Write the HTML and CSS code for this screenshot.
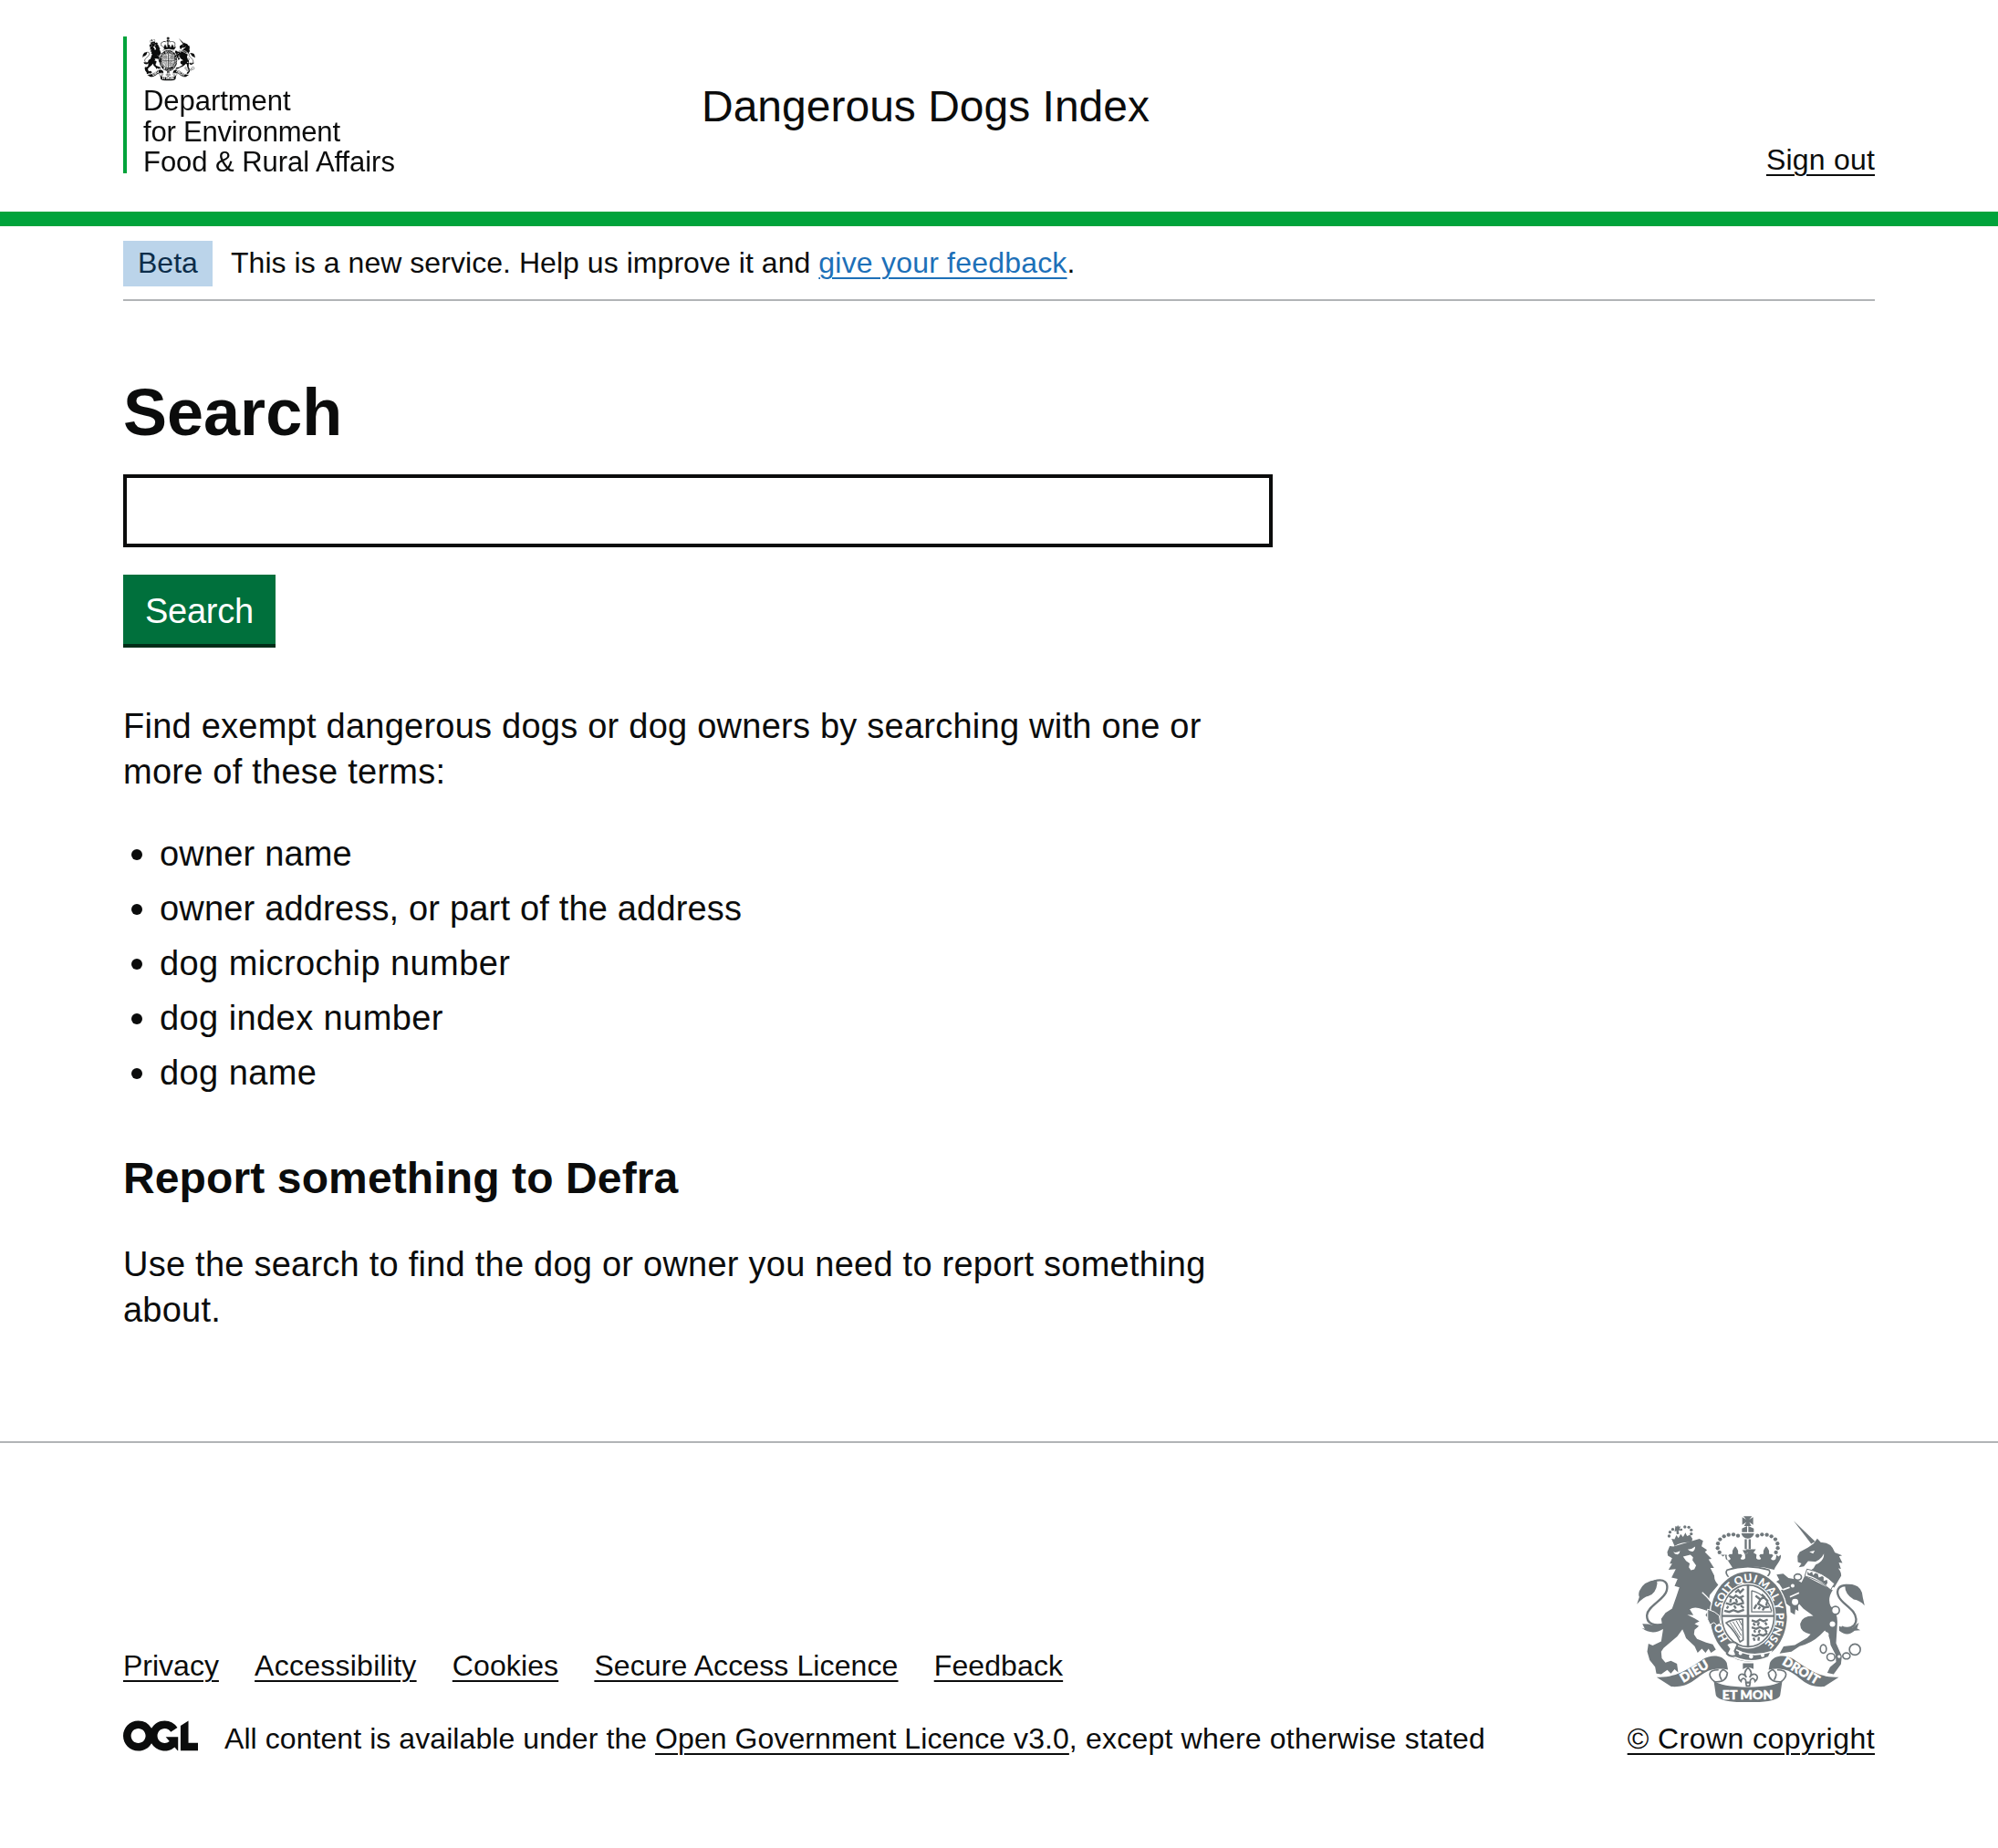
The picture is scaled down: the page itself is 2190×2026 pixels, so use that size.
FILE: index.html
```html
<!DOCTYPE html>
<html lang="en">
<head>
<meta charset="utf-8">
<title>Search - Dangerous Dogs Index</title>
<link rel="stylesheet" href="styles.css">
</head>
<body>
<svg class="sprite" width="0" height="0" aria-hidden="true">
  <symbol id="crest" viewBox="72 65 750 613">
    <!-- imperial crown -->
    <g fill="currentColor">
      <path d="M423 66h28l-9 11 13-8v25l-13-9 7 13h-24l7-13-13 9V69l13 8z"/>
      <path d="M418 118v-12l17-8v20zM439 98l18 8v12h-18zM416 122h42q-3 16-21 17-18-1-21-17z"/>
      <path d="M427 142h7v32h-7zM440 142h7v32h-7z"/>
      <circle cx="405" cy="130" r="6.500"/><circle cx="390" cy="126" r="6.500"/><circle cx="374" cy="127" r="6.500"/><circle cx="359" cy="132" r="6.500"/><circle cx="346" cy="142" r="6.500"/><circle cx="339" cy="156" r="6.500"/><circle cx="338" cy="171" r="6.500"/><circle cx="344" cy="185" r="6.500"/>
      <circle cx="469" cy="130" r="6.500"/><circle cx="484" cy="126" r="6.500"/><circle cx="500" cy="127" r="6.500"/><circle cx="515" cy="132" r="6.500"/><circle cx="528" cy="142" r="6.500"/><circle cx="535" cy="156" r="6.500"/><circle cx="536" cy="171" r="6.500"/><circle cx="530" cy="185" r="6.500"/>
      <path d="M420 178h34l-8 14-9-6-9 6z"/>
      <path d="M348 193l8 6 6-6 3 14q8 8 16-1l-8-10q2-8 12-5l2-4q-3-9 9-22 12 13 9 22l2 4q10-3 12 5l-6 10q10 6 16-2l-1-12 10-6-8-11h34l-8 11 10 6-1 12q6 8 16 2l-6-10q2-8 12-5l2-4q-3-9 9-22 12 13 9 22l2 4q10-3 12 5l-8 10q8 9 16 1l3-14 6 6 8-6c3 18-15 32-22 49q-70-20-134 0c-7-17-25-31-22-49z"/>
    </g>
    <path d="M369 243q68-22 138 0 8 10-8 24-62-22-124 0-14-14-6-24z" fill="#fff" stroke="currentColor" stroke-width="5"/>
    <!-- lion -->
    <g fill="currentColor">
      <path d="M186 140L196 142 202 128 209 138 216 124 224 134 232 120 237 131 247 127 255 140 252 152Q220 150 196 164Z"/>
      <circle cx="178" cy="131" r="5"/><circle cx="181" cy="118" r="5"/><circle cx="190" cy="109" r="5"/><circle cx="218" cy="110" r="4"/><circle cx="230" cy="101" r="5"/><circle cx="243" cy="102" r="5"/><circle cx="251" cy="111" r="5"/><circle cx="251" cy="124" r="5"/>
      <path d="M199 98l5 2 3-5 3 5 6-1-3 8 3 7-7-2 2 12-8 1-1-11-6 3z"/>
      <path d="M172 184L180 164 192 166 278 140 290 147 285 165 303 177 296 184 318 206 308 208 326 236 314 236 327 262Q326 278 340 292L312 325 309 342Q332 360 341 388L347 412 336 424 326 412 314 422 308 404 298 392 306 378 288 372Q262 362 246 372L258 392 238 390 262 402 278 412 262 420 276 428 262 440 260 455 270 470 300 482 322 488 332 505 316 516 308 502 298 516 286 502 272 516 262 494 234 468 228 452 222 438 205 462 160 500 152 512 154 534 166 548 184 542 204 552 208 580 196 570 184 584 172 572 152 586 136 584 132 562 114 540 106 512 110 486 124 492 152 478 158 440 152 404 166 384 188 370 202 330 212 300 196 296 206 272 186 268 200 240 176 242 188 222 180 222 188 204 174 196Z"/>
      <path d="M137 275q-44 4-57 37-4 13 0 20l-8 24q24-26 38-27 25-9 29-42zM90 420l8 17-10-3q35 27 72 2l3-18q-30 12-53 3z"/>
    </g>
    <path d="M128 280c34-10 49 4 42 31-7 30-63 50-65 81-1 30 27 37 57 29" fill="none" stroke="currentColor" stroke-width="7"/>
    <path d="M192 184q10 4 22-4-1 10-8 12-10 0-14-8zM240 174q12 2 24-8 0 12-8 16-12 0-16-8zM224 199l24-6 9 8-2 10 12 17-6 13-11 3-7-10 3-13-12-8z" fill="#fff"/>
    <path d="M287 317q34 30 48 62" fill="none" stroke="#fff" stroke-width="4"/>
    <!-- unicorn -->
    <g fill="currentColor">
      <path d="M588 81l71 68-13 8z"/>
      <path d="M601 197l7-13 28-15 18-13 12-17 12 13q34-2 46 33l24 10-10 3 11 22-12-2 7 21-9-1q10 10 10 24l-23 39-95-44 27-20 12-21-30-2-14 17-17 3 9-13-12-4z"/>
      <path d="M625 262l92 47q-18 27-7 53 25 23 22 59l-4 63 19 43-3 26-24 33-21-4 9-19 20-17-2-24-16-32q-2-32-19-48l-15 15q-27 26-68 37l-27 18-39 6 13-23 37-5 41-24 11-11q-36-8-34-34 4-27 43-27l-33-24-18-20 2 28-10-6-2 18-14-8-1-19-20-14-11-24-27 8 2-18 32-7-12-19-10-8 10-6-9-17 22-3 17 14 26 5 17 10z"/>
      <path d="M757 290q57-5 59 43l6 27q-16-17-36-20-30-16-29-50zM738 428q25 12 46 4l19-16-6 19 11 6-19 2q-24 22-51 0z"/>
    </g>
    <path d="M774 295c-33-7-48 11-38 34 10 27 56 41 58 76 0 29-28 34-48 25" fill="none" stroke="currentColor" stroke-width="7"/>
    <path d="M632 240q52 9 91 48l-13 20q-38-34-85-45z" fill="#fff" stroke="currentColor" stroke-width="3"/>
    <path d="M634 259l-1-11 7 6 9-6 3 12 8-7 8 3 3 12 11-5 5 3 0 13 11-4 2 9-5 9q-28-22-61-34z" fill="currentColor"/>
    <path d="M640 183l18-4-6 10zM688 189q1 29-36 39l-5-8q31-8 41-31z" fill="#fff"/>
    <g fill="none" stroke="currentColor" stroke-width="5">
      <ellipse cx="602" cy="266" rx="12" ry="10" fill="#fff"/><ellipse cx="593" cy="348" rx="13" ry="13" fill="#fff"/><ellipse cx="726" cy="376" rx="13" ry="13" fill="#fff"/>
      <ellipse cx="686" cy="503" rx="10" ry="14"/><ellipse cx="711" cy="530" rx="13" ry="12"/><ellipse cx="762" cy="526" rx="12" ry="10"/><circle cx="790" cy="505" r="18"/>
    </g>
    <g fill="#fff"><circle cx="716" cy="421" r="9"/><circle cx="695" cy="456" r="9"/><circle cx="738" cy="528" r="5"/><circle cx="585" cy="295" r="6"/></g>
    <path d="M575 300l-22 8M606 318l-30 14" stroke="#fff" stroke-width="5" fill="none"/>
    <!-- garter and shield -->
    <ellipse cx="440" cy="396" rx="130" ry="152" fill="#fff"/>
    <ellipse cx="440" cy="396" rx="126" ry="148" fill="currentColor"/>
    <ellipse cx="438" cy="394" rx="92" ry="108" fill="#fff"/>
    <ellipse cx="438" cy="394" rx="86" ry="102" fill="none" stroke="currentColor" stroke-width="5"/>
    <path d="M434 292h8v204h-8zM352 391h172v7H352z" fill="currentColor"/>
    <g fill="none" stroke="currentColor" stroke-width="7">
      <path d="M376 329l14 6 8-8 12 8 14-7M382 338l-3 12M398 338l4 12M414 336l8 12M365 352l16 5 12-6 12 6 20-6M373 362l-5 8M392 360l6 10M414 360l10 8M360 377l16 4 14-6 15 6 20-7M396 317l10-8 6 8 12-12"/>
      <path d="M450 409l15 5 12-8 12 6 14-6M455 418l6 8M474 415l-4 12M494 416l6 8M450 432l15 5 12-6 12 6 18-6M458 441l4 8M477 440l-4 10M494 440l6 8M450 456l14 5 12-6 12 4 14-8M456 466l4 10M474 464l-2 12"/>
      <path d="M463 328l16 12-8 14 22 12 14-2M477 341l14-10-8-8M490 332l12 12-4 16M466 357l-8 14M478 364l-6 8M492 366l-6 10"/>
      <path d="M450 311v70h66M450 311q50 12 66 68" stroke-width="4"/>
      <path d="M366 417q22-14 54-12l2 68-10 7q-14-32-46-63z" stroke-width="5"/>
      <path d="M378 415l34 52M388 413l28 46M399 410l18 33M409 408l9 18" stroke-width="3"/>
    </g>
    <path id="garter-line" d="M440 510A100 115 0 0 1 440 281A100 115 0 0 1 440 510" fill="none"/>
    <g class="crest-text" font-size="36">
      <text><textPath href="#garter-line" startOffset="17%">HO</textPath></text>
      <text><textPath href="#garter-line" startOffset="35.500%">SOIT</textPath></text>
      <text><textPath href="#garter-line" startOffset="48.500%">QUI</textPath></text>
      <text><textPath href="#garter-line" startOffset="61%">MAL</textPath></text>
      <text><textPath href="#garter-line" startOffset="70%">Y</textPath></text>
      <text><textPath href="#garter-line" startOffset="82%">PENSE</textPath></text>
    </g>
    <path d="M305 372q26 8 38 21l4 26-12 6-9-9-13 7-8-17z" fill="currentColor" stroke="#fff" stroke-width="3"/>
    <path d="M378 492q58 46 136 20l-8 18q-66 28-132-9z" fill="currentColor" stroke="#fff" stroke-width="5"/>
    <path d="M366 488q24-15 38 0l-10 22 6 14q-20 8-32-6l8-15z" fill="#fff" stroke="currentColor" stroke-width="6"/>
    <g fill="#fff"><circle cx="413" cy="517" r="6"/><circle cx="448" cy="528" r="7"/><circle cx="486" cy="524" r="6"/></g>
    <!-- fleur-de-lis -->
    <path d="M421 550h35v19q-9-5-18-5-9 0-17 6z" fill="currentColor"/>
    <path d="M438 565q18 16 5 32 10-15 20-10 13 9-2 23-2-12-11-9-6 3-5 12h-14q1-9-5-12-9-3-11 9-15-14-2-23 10-5 20 10-13-16 5-32zM431 615h14l-2 10h-10z" fill="#fff" stroke="currentColor" stroke-width="5"/>
    <!-- motto scroll -->
    <g fill="#fff" stroke="currentColor" stroke-width="5">
      <path d="M341 572q-28 0-29 14 0 12 16 25 39 3 42-29-12-15-18-8-14 11-1 31"/>
      <path d="M534 572q28 0 29 14 0 12-16 25-39 3-42-29 12-15 18-8 14 11 1 31"/>
    </g>
    <g fill="currentColor">
      <path d="M137 596c66 4 112-32 153-59 26-17 67-14 78 12l4 22q-45-8-76 10c-35 21-53 50-111 46z"/>
      <path d="M737 596c-66 4-108-32-149-59-26-17-67-14-78 12l-4 22q45-8 76 10c35 21 49 50 107 46z"/>
      <path d="M325 607q25 22 113 22 88 0 113-22l-7 48q-4 24-106 24-100 0-106-24z"/>
    </g>
    <g class="crest-text crest-motto" font-size="42">
      <text transform="translate(261 577) rotate(-31)" y="14">DIEU</text>
      <text transform="translate(613 575) rotate(31)" y="14">DROIT</text>
      <text x="437" y="668">ET MON</text>
    </g>
  </symbol>
</svg>

<header class="header">
  <div class="container header-inner">
    <a class="org" href="#">
      <svg class="org-crest"><use href="#crest"/></svg>
      <span class="org-line">Department</span>
      <span class="org-line org-line-tight">for Environment</span>
      <span class="org-line">Food &amp; Rural Affairs</span>
    </a>
    <div class="service">Dangerous Dogs Index</div>
    <a class="link sign-out" href="#">Sign out</a>
  </div>
</header>

<div class="container">
  <div class="phase">
    <strong class="tag">Beta</strong>
    <span class="phase-text">This is a new service. Help us improve it and <a class="link link-blue" href="#">give your feedback</a>.</span>
  </div>
  <main class="main">
    <form class="search">
      <h1 class="title"><label for="q">Search</label></h1>
      <input class="input" id="q" type="text">
      <button class="button" type="button">Search</button>
    </form>
    <p class="body">Find exempt dangerous dogs or dog owners by searching with one or<br>more of these terms:</p>
    <ul class="list">
      <li>owner name</li>
      <li>owner address, or part of the address</li>
      <li class="wide">dog microchip number</li>
      <li class="wide">dog index number</li>
      <li class="wide">dog name</li>
    </ul>
    <h2 class="subtitle">Report something to Defra</h2>
    <p class="body">Use the search to find the dog or owner you need to report something<br>about.</p>
  </main>
</div>

<footer class="footer">
  <div class="container footer-inner">
    <div class="footer-main">
      <nav class="footer-nav">
        <a class="link" href="#">Privacy</a>
        <a class="link nav-accessibility" href="#">Accessibility</a>
        <a class="link nav-item" href="#">Cookies</a>
        <a class="link nav-item" href="#">Secure Access Licence</a>
        <a class="link nav-item" href="#">Feedback</a>
      </nav>
      <div class="licence">
        <svg class="ogl" viewBox="0 0 483.2 195.7"><path fill="currentColor" d="M421.5 142.8V.1l-50.7 32.3v161.1h112.4v-50.7zm-122.3-9.6A47.12 47.12 0 0 1 221 97.8c0-26 21.1-47.1 47.1-47.1 16.7 0 31.4 8.7 39.7 21.8l42.7-27.2A97.63 97.63 0 0 0 268.1 0c-36.5 0-68.3 20.1-85.1 49.7A98 98 0 0 0 97.8 0C43.9 0 0 43.9 0 97.8s43.9 97.8 97.8 97.8c36.5 0 68.3-20.1 85.1-49.7a97.76 97.76 0 0 0 149.6 25.4l19.4 22.2h3v-87.8h-80l24.3 27.5zM97.8 145c-26 0-47.1-21.1-47.1-47.1s21.1-47.1 47.1-47.1 47.1 21.1 47.1 47.1S123.800 145 97.800 145"/></svg>
        <span class="licence-text">All content is available under the <a class="link" href="#">Open Government Licence v3.0</a><span class="licence-end">, except where otherwise stated</span></span>
      </div>
    </div>
    <a class="copyright" href="#">
      <svg class="footer-crest"><use href="#crest"/></svg>
      <span class="link">© Crown copyright</span>
    </a>
  </div>
</footer>
</body>
</html>
```
FILE: styles.css
```css
* { box-sizing: border-box; }

body {
  margin: 0;
  background: #fff;
  color: #0b0c0c;
  font-family: "Liberation Sans", Arial, sans-serif;
  font-size: 32px;
  line-height: 40px;
}

.sprite { display: block; }

.container { width: 1920px; margin: 0 auto; }

.link {
  color: #0b0c0c;
  text-decoration: underline;
  text-decoration-thickness: 2px;
  text-underline-offset: 5px;
}
.link-blue { color: #1d70b8; letter-spacing: 0.2px; }

.crest-text {
  fill: #fff;
  font-family: Lato, sans-serif;
  font-weight: 900;
  text-anchor: middle;
}
.crest-motto { stroke: #fff; stroke-width: 1.5px; }

/* Header */
.header { border-bottom: 16px solid #00a33b; }
.header-inner {
  display: grid;
  grid-template-columns: 634px 1fr auto;
  height: 232px;
  padding-top: 40px;
}
.org {
  display: flex;
  flex-direction: column;
  width: 297px;
  height: 150px;
  padding-left: 17px;
  border-left: 4px solid #00a33b;
  overflow: hidden;
  color: #0b0c0c;
  font-size: 31px;
  line-height: 33.5px;
  text-decoration: none;
  white-space: nowrap;
}
.org-crest { flex: none; width: 58px; height: 49px; margin-bottom: 5px; filter: blur(0.5px); }
.org-line { padding-left: 1px; letter-spacing: -0.05px; filter: blur(0.5px); }
.org-line-tight { letter-spacing: -0.2px; }
.service { padding-top: 47px; font-size: 48px; line-height: 60px; }
.sign-out { align-self: start; margin-top: 115px; letter-spacing: 0.2px; }

/* Phase banner */
.phase {
  display: flex;
  align-items: flex-start;
  gap: 20px;
  height: 82px;
  padding-top: 16px;
  border-bottom: 2px solid #b1b4b6;
}
.tag {
  width: 98px;
  padding: 4px 0 6px 16px;
  background: #bbd4ea;
  color: #0c2d4a;
  font-weight: 400;
}
.phase-text { padding-top: 4px; letter-spacing: 0.05px; }

/* Search */
.main { width: 1260px; padding: 80px 0 79px; }
.search { display: flex; flex-direction: column; align-items: flex-start; margin-bottom: 61px; }
.title { margin: 0; padding: 2px 0 28px; font-size: 72px; line-height: 80px; }
.input {
  width: 1260px;
  height: 80px;
  margin: 0 0 30px;
  border: 4px solid #0b0c0c;
  border-radius: 0;
  background: #fff;
}
.button {
  width: 167px;
  height: 80px;
  margin: 0;
  padding: 4px 0 0 24px;
  border: 0;
  border-bottom: 4px solid #002d18;
  background: #00703c;
  color: #fff;
  font: 38px/72px "Liberation Sans", Arial, sans-serif;
  letter-spacing: -0.25px;
  text-align: left;
}
.body, .list { margin: 0 0 40px; font-size: 38px; line-height: 50px; letter-spacing: 0.24px; white-space: nowrap; }
.list { margin-bottom: 51px; padding-left: 9px; list-style: none; }
.list li { display: flex; gap: 19px; margin-bottom: 10px; letter-spacing: 0.18px; }
.list li::before {
  content: "";
  width: 12px;
  height: 12px;
  margin-top: 20px;
  border-radius: 50%;
  background: #0b0c0c;
}
.list .wide { letter-spacing: 0.42px; }
.subtitle { margin: 0 0 39px; padding-top: 10px; font-size: 48px; line-height: 60px; letter-spacing: 0.12px; }

/* Footer */
.footer { border-top: 2px solid #b1b4b6; }
.footer-inner { display: flex; justify-content: space-between; align-items: flex-end; padding-top: 80px; }
.footer-nav { display: flex; gap: 39.2px; margin-bottom: 40px; }
.nav-item { letter-spacing: 0.11px; }
.nav-accessibility { letter-spacing: 0.25px; }
.licence { display: flex; align-items: flex-start; gap: 29px; white-space: nowrap; }
.licence-text { letter-spacing: 0.07px; }
.licence-end { letter-spacing: 0.2px; }
.ogl { width: 82px; height: 34px; flex: none; }
.copyright { display: flex; flex-direction: column; align-items: flex-end; text-decoration: none; letter-spacing: 0.45px; }
.footer-crest { width: 250px; height: 204px; margin: 0 11px 20px 0; color: #6f777b; }
```
